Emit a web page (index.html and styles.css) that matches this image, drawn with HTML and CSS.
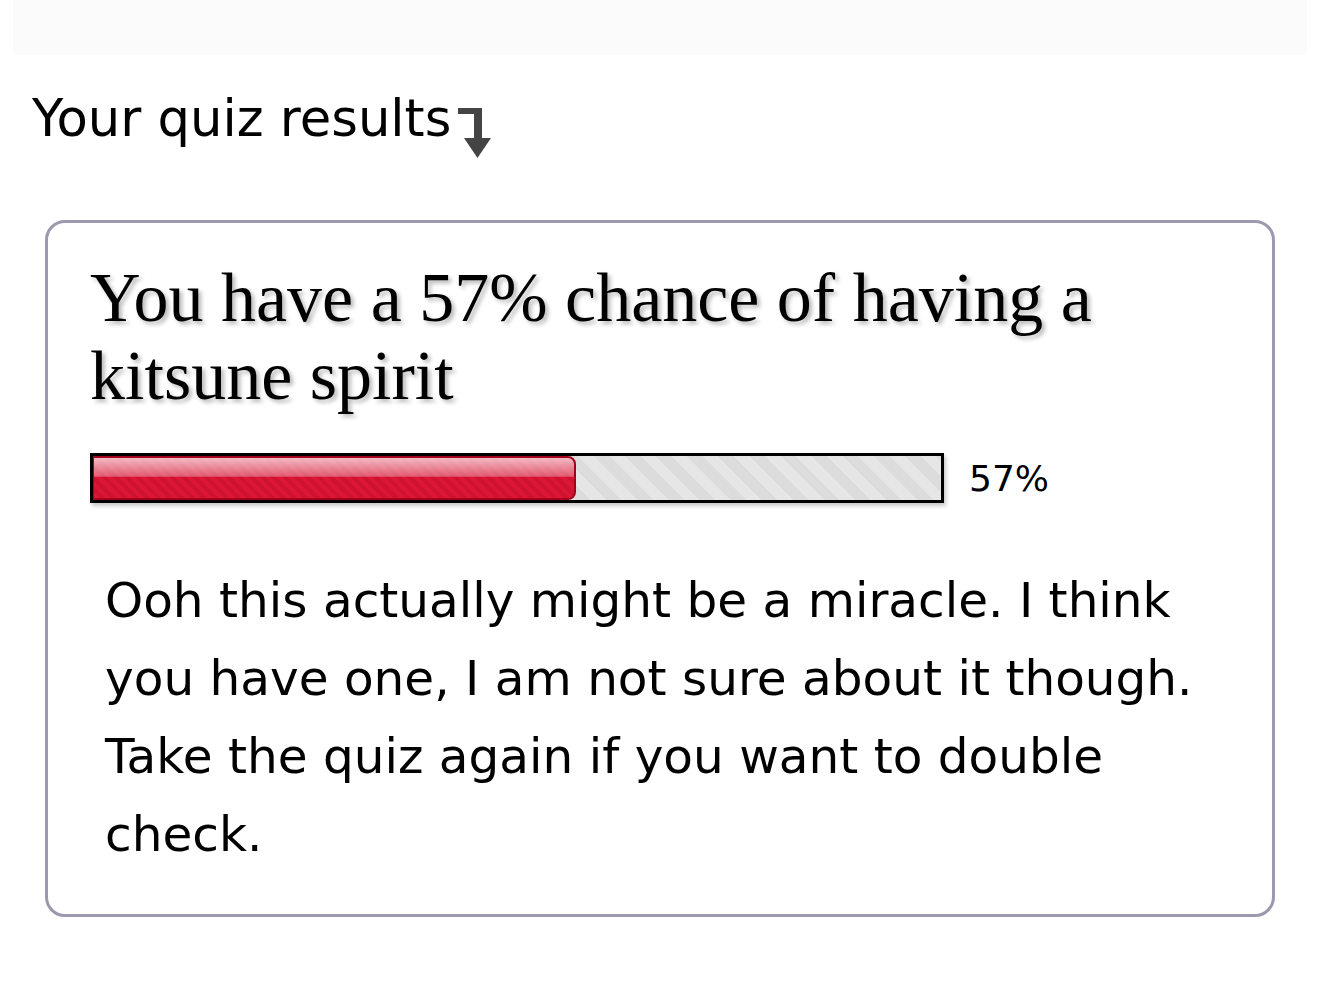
FILE: index.html
```html
<!DOCTYPE html>
<html lang="en">
<head>
<meta charset="utf-8">
<title>Your quiz results</title>
<link rel="stylesheet" href="styles.css">
</head>
<body>
<div class="topbar"></div>
<h2 class="section-title">
  <span>Your quiz results</span>
  <svg class="down-arrow" width="34" height="52" viewBox="0 0 34 52" aria-hidden="true">
    <path d="M0 1 H24 V31 H16 V7 H0 Z" fill="#444"/>
    <path d="M6 31 H33 L19.5 51 Z" fill="#444"/>
  </svg>
</h2>
<section class="result-card">
  <h1 class="result-title">You have a 57% chance of having a kitsune spirit</h1>
  <div class="meter-row">
    <div class="meter">
      <div class="meter-fill" style="width: 57%"></div>
    </div>
    <span class="meter-label">57%</span>
  </div>
  <p class="result-text">Ooh this actually might be a miracle. I think you have one, I am not sure about it though. Take the quiz again if you want to double check.</p>
</section>
</body>
</html>
```
FILE: styles.css
```css
html, body {
  margin: 0;
  padding: 0;
  background: #ffffff;
}

body {
  font-family: "DejaVu Sans", Verdana, sans-serif;
  color: #000;
}

.topbar {
  height: 55px;
  margin: 0 13px;
  background: #fbfbfb;
}

.section-title {
  display: flex;
  align-items: flex-start;
  height: 58px;
  margin: 34px 0 0 32px;
  font-size: 51.2px;
  font-weight: normal;
  line-height: 58px;
}

.down-arrow {
  display: block;
  flex: none;
  margin: 18px 0 0 7px;
}

.result-card {
  box-sizing: border-box;
  width: 1230px;
  margin: 73px 0 0 45px;
  padding: 36px 42px 41px 42px;
  border: 3px solid #9c99ae;
  border-radius: 20px;
}

.result-title {
  margin: 0;
  font-family: "Liberation Serif", Georgia, serif;
  font-size: 70px;
  font-weight: normal;
  line-height: 78px;
  text-shadow: 3px 3px 4px rgba(0, 0, 0, 0.28);
}

.meter-row {
  display: flex;
  align-items: center;
  margin-top: 38px;
}

.meter {
  box-sizing: border-box;
  width: 854px;
  height: 50px;
  border: 3px solid #000;
  background: repeating-linear-gradient(45deg, #e6e6e6 0 11px, #dcdcdc 11px 22px);
  box-shadow: 2px 3px 4px rgba(0, 0, 0, 0.22);
}

.meter-fill {
  box-sizing: border-box;
  height: 100%;
  border: 2px solid #a3001c;
  border-left-width: 1px;
  border-radius: 0 8px 8px 0;
  background:
    linear-gradient(to bottom, rgba(255, 255, 255, 0.7) 0%, rgba(255, 255, 255, 0.3) 46%, rgba(255, 255, 255, 0) 47%),
    repeating-linear-gradient(45deg, #dd1537 0 4px, #ce1330 4px 8px);
}

.meter-label {
  margin-left: 25px;
  font-size: 36px;
}

.result-text {
  margin: 58px 0 0 15px;
  font-size: 48.5px;
  line-height: 78px;
}
```
